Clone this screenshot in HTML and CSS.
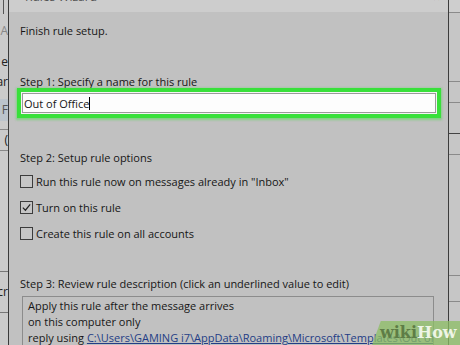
FILE: index.html
```html
<!DOCTYPE html>
<html>
<head>
<meta charset="utf-8">
<link rel="stylesheet" href="styles.css">
</head>
<body>
<div class="screen">
  <div class="side-left">
    <div class="sl-row sl-top"></div>
    <div class="sl-row sl-a">A</div>
    <div class="sl-row sl-e">e</div>
    <div class="sl-row sl-ar">ar</div>
    <div class="sl-row sl-f">F</div>
    <div class="sl-row sl-p">(</div>
    <div class="sl-row sl-gap"></div>
    <div class="sl-row sl-cr">cr</div>
  </div>
  <div class="dialog">
    <div class="titlebar"><span class="title">Rules Wizard</span><span class="close">×</span></div>
    <div class="content">
      <div class="heading">Finish rule setup.</div>
      <div class="label step1">Step 1: Specify a name for this rule</div>
      <div class="namebox"><span class="value">Out of Office</span><span class="caret"></span></div>
      <div class="label step2">Step 2: Setup rule options</div>
      <div class="options">
        <div class="option"><span class="check"></span><span>Run this rule now on messages already in "Inbox"</span></div>
        <div class="option"><span class="check checked"><svg viewBox="0 0 12 12" width="11" height="11"><path d="M2 6.2 L4.8 9 L10 2.6" fill="none" stroke="#222" stroke-width="1.3"/></svg></span><span>Turn on this rule</span></div>
        <div class="option"><span class="check"></span><span>Create this rule on all accounts</span></div>
      </div>
      <div class="label step3">Step 3: Review rule description (click an underlined value to edit)</div>
      <div class="desc">
        <div>Apply this rule after the message arrives</div>
        <div>on this computer only</div>
        <div>reply using <a class="link">C:\Users\GAMING i7\AppData\Roaming\Microsoft\Templates\Out of Office.oft</a></div>
      </div>
    </div>
  </div>
  <div class="side-right">
    <div class="sr-row h12"></div>
    <div class="sr-row h68"></div>
    <div class="sr-row h20"></div>
    <div class="sr-row h30"></div>
    <div class="sr-row h20"></div>
    <div class="sr-row h125"></div>
    <div class="sr-row h25"></div>
    <div class="sr-row hrest"></div>
  </div>
  <div class="wikihow"><span class="wk">wiki</span><span class="hw">How</span></div>
</div>
</body>
</html>
```
FILE: styles.css
```css
html, body {
  margin: 0;
  padding: 0;
}
body {
  width: 460px;
  height: 345px;
  overflow: hidden;
  background: #c4c4c4;
  font-family: "Open Sans", "Noto Sans", sans-serif;
  font-size: 11px;
  color: #161616;
}
.screen {
  position: relative;
  display: flex;
  width: 460px;
  height: 345px;
  overflow: hidden;
}
.side-left {
  width: 8px;
  flex: none;
  display: flex;
  flex-direction: column;
  background: #cbcbcb;
  border-right: 1px solid #3a3a3a;
  overflow: hidden;
}
.sl-row {
  display: flex;
  justify-content: flex-end;
  white-space: nowrap;
  overflow: hidden;
  font-size: 12px;
  line-height: 14px;
  color: #222;
}
.sl-top { height: 14px; border-right: 1px solid #555; margin-right: 4px; }
.sl-a { height: 22px; align-items: center; color: #888; margin-top: 6px; }
.sl-e { height: 20px; align-items: center; margin-top: 10px; }
.sl-ar { height: 20px; align-items: center; }
.sl-f { height: 22px; align-items: center; background: #bcc4cc; color: #555; margin-top: 7px; }
.sl-p { height: 20px; align-items: center; border-top: 1px solid #888; border-bottom: 1px solid #888; margin-top: 8px; }
.sl-gap { height: 120px; border-bottom: 1px solid #777; }
.sl-cr { height: 40px; align-items: center; border-bottom: 1px solid #777; }

.dialog {
  flex: 1;
  display: flex;
  flex-direction: column;
  background: #c1c1c1;
}
.titlebar {
  height: 12px;
  flex: none;
  background: #cdcdcd;
  display: flex;
  justify-content: space-between;
  overflow: hidden;
  padding: 0 8px 0 16px;
}
.title {
  font-size: 12px;
  line-height: 12px;
  margin-top: -9px;
  color: #555;
}
.close {
  font-size: 12px;
  line-height: 12px;
  margin-top: -8px;
  color: #555;
}
.content {
  padding: 0 0 0 11px;
  display: flex;
  flex-direction: column;
}
.heading {
  line-height: 15px;
  margin-top: 11px;
}
.label {
  line-height: 15px;
}
.step1 { margin-top: 37px; line-height: 14px; }
.namebox {
  margin: 4px 0 0 2px;
  width: 411px;
  height: 18px;
  background: #fdfdfd;
  border: 1px solid #9a9a9a;
  box-shadow: 0 0 0 1px #f4f4f4, 0 0 0 5px #38e03a, 0 1px 2px 6px rgba(56, 224, 58, 0.45);
  display: flex;
  align-items: center;
  padding-left: 1px;
}
.value { line-height: 15px; }
.caret {
  width: 1px;
  height: 13px;
  background: #000;
}
.step2 { margin-top: 37px; }
.options {
  margin-top: 3px;
  display: flex;
  flex-direction: column;
}
.option {
  height: 26px;
  display: flex;
  align-items: center;
  gap: 3px;
}
.check {
  width: 11px;
  height: 11px;
  border: 1px solid #3c3c3c;
  background: #c6c6c6;
  display: flex;
  align-items: center;
  justify-content: center;
}
.step3 { margin-top: 30px; }
.desc {
  margin: 5px 0 0 2px;
  width: 405px;
  height: 60px;
  border: 1px solid #8c8c8c;
  border-bottom: none;
  padding: 1px 0 0 5px;
  line-height: 16px;
  white-space: nowrap;
  overflow: hidden;
}
.link {
  color: #233d86;
  text-decoration: underline;
}

.side-right {
  width: 11px;
  flex: none;
  display: flex;
  flex-direction: column;
  border-left: 1px solid #3c3c3c;
  background: #c6c6c6;
}
.sr-row { border-bottom: 1px solid #8a8a8a; }
.h12 { height: 12px; background: #cecece; }
.h68 { height: 68px; }
.h20 { height: 20px; }
.h30 { height: 30px; border-bottom-color: #444; }
.h125 { height: 120px; }
.h25 { height: 25px; }
.hrest { flex: 1; border-bottom: none; }

.wikihow {
  position: absolute;
  right: 0;
  bottom: 0;
  width: 80px;
  height: 24px;
  background: rgba(140, 190, 100, 0.75);
  clip-path: polygon(10% 0, 100% 0, 100% 100%, 0 100%);
  display: flex;
  align-items: center;
  padding-left: 8px;
  font-family: "DejaVu Serif", serif;
  font-weight: bold;
  font-size: 16px;
  line-height: 20px;
}
.wk { color: #5e7d46; }
.hw { color: #eef5e6; }
```
